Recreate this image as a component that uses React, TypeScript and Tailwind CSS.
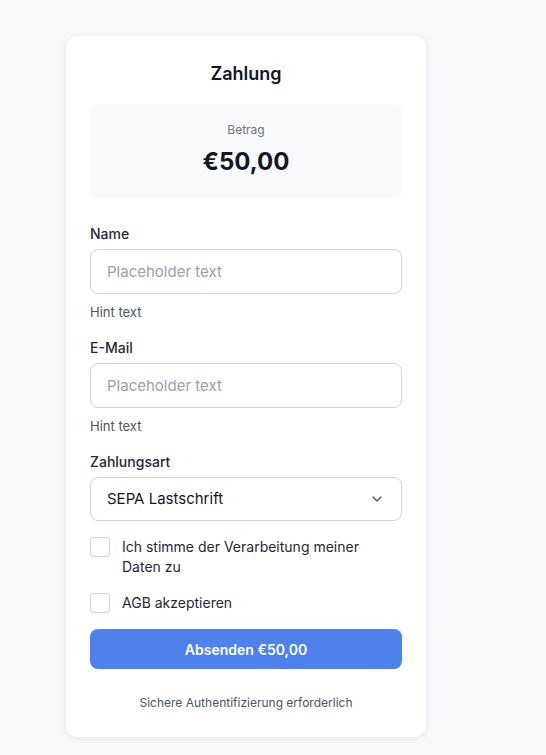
import { ChevronDown } from 'lucide-react';

function Field({ label, placeholder }: { label: string; placeholder: string }) {
    return (
        <div className="flex flex-col">
            <label className="text-[14px] leading-5 font-medium text-gray-800">{label}</label>
            <input
                type="text"
                placeholder={placeholder}
                className="mt-[5px] h-[45px] rounded-lg border border-gray-300 px-4 text-[15px] text-gray-900 placeholder:text-gray-400 outline-none"
            />
            <span className="mt-2 text-[13px] leading-5 text-gray-600">Hint text</span>
        </div>
    );
}

function Checkbox({ children }: { children: React.ReactNode }) {
    return (
        <label className="flex items-start gap-3">
            <span className="w-5 h-5 shrink-0 rounded border border-gray-300 bg-white" />
            <span className="max-w-[250px] text-[14px] leading-5 text-gray-800">{children}</span>
        </label>
    );
}

export default function App() {
    return (
        <div className="min-h-screen bg-[#f8f9fb] pt-9 pl-[66px]" style={{ fontFamily: 'Inter, "Liberation Sans", sans-serif' }}>
            <div className="w-[360px] bg-white rounded-xl shadow-[0_2px_8px_rgba(15,23,42,0.08)] p-6">
                <h1 className="text-center text-[18px] leading-7 font-semibold text-gray-900">Zahlung</h1>

                <div className="mt-4 rounded-lg bg-gray-50 pt-[18px] pb-5 flex flex-col items-center">
                    <span className="text-[12px] leading-4 text-gray-500">Betrag</span>
                    <span className="mt-2 text-[24px] leading-8 font-bold text-gray-900">€50,00</span>
                </div>

                <div className="mt-[26px] flex flex-col gap-4">
                    <Field label="Name" placeholder="Placeholder text" />
                    <Field label="E-Mail" placeholder="Placeholder text" />

                    <div className="flex flex-col">
                        <label className="text-[14px] leading-5 font-medium text-gray-800">Zahlungsart</label>
                        <button className="mt-[5px] h-[44px] rounded-lg border border-gray-300 px-4 flex items-center justify-between text-[15px] text-gray-900">
                            <span>SEPA Lastschrift</span>
                            <ChevronDown size={16} className="text-gray-600" />
                        </button>
                    </div>

                    <Checkbox>Ich stimme der Verarbeitung meiner Daten zu</Checkbox>
                    <Checkbox>AGB akzeptieren</Checkbox>

                    <button className="h-10 rounded-lg bg-[#4f81ec] text-white text-[14px] font-semibold">
                        Absenden €50,00
                    </button>
                </div>

                <p className="mt-6 text-center text-[12px] leading-5 text-gray-600">
                    Sichere Authentifizierung erforderlich
                </p>
            </div>
        </div>
    );
}
